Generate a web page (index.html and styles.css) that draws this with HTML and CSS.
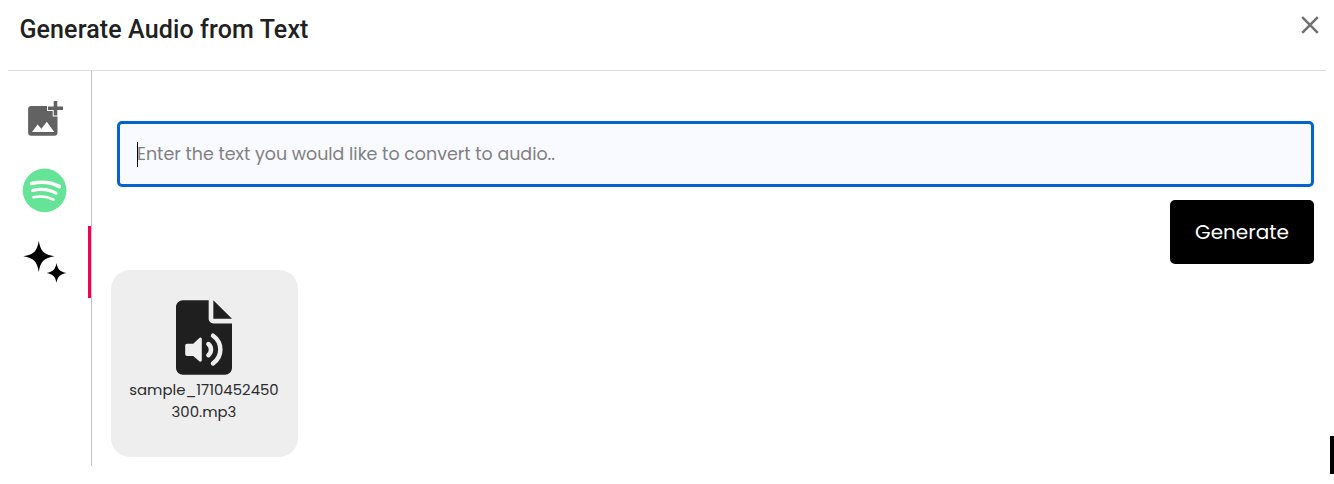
FILE: index.html
```
<!DOCTYPE html>
<html lang="en">
  <head>
    <meta charset="UTF-8" />
    <meta name="viewport" content="width=device-width, initial-scale=1.0" />
    <title>Generate Audio from Text</title>
    <link rel="stylesheet" href="styles.css">
  </head>
  <body>
    <div class="modal">
      <header class="modal-header">
        <h1>Generate Audio from Text</h1>
        <button class="close-btn" aria-label="Close">
          <svg width="18" height="18" viewBox="0 0 18 18">
            <path d="M1.200 1.200l15.600 15.600M16.800 1.200L1.200 16.800" stroke="currentColor" stroke-width="2.500" />
          </svg>
        </button>
      </header>
      <div class="modal-body">
        <nav class="tabs">
          <button class="tab" aria-label="Upload">
            <svg width="44" height="44" viewBox="0 0 44 44">
              <path fill="#626262" d="M8.300 9.100H31l3.500 4v22.500a3.200 3.200 0 0 1-3.200 3.200h-23a3.200 3.200 0 0 1-3.200-3.200V12.300a3.200 3.200 0 0 1 3.200-3.200z" />
              <path fill="#fff" d="M9 35l5.600-7.600 3.800 4.400 5.400-7L31.300 35z" />
              <path fill="#626262" stroke="#fff" stroke-width="2" paint-order="stroke" d="M30.700 4h3.600v5.400H40v3.500h-5.700v5.500h-3.600v-5.500H25V9.400h5.700z" />
            </svg>
          </button>
          <button class="tab" aria-label="Spotify">
            <svg width="44" height="44" viewBox="0 0 44 44">
              <circle cx="21.600" cy="22.400" r="21.800" fill="#65e397" />
              <g fill="none" stroke="#fff" stroke-linecap="round">
                <path stroke-width="3.700" d="M8.700 15.500c9.500-2.200 19.500-1.300 27.500 3" />
                <path stroke-width="3.100" d="M9.500 22.400c8.300-1.900 16.700-1 23.500 2.800" />
                <path stroke-width="2.600" d="M10.500 29.200c7.200-1.500 14-.8 20 2.500" />
              </g>
            </svg>
          </button>
          <button class="tab active" aria-label="Generate">
            <svg width="44" height="44" viewBox="0 0 44 44">
              <path d="M15.800.700C17.500 11.200 20.900 14.600 31.500 16.300 20.900 18 17.500 21.400 15.800 31.900 14.100 21.400 10.700 18 .300 16.300 10.700 14.600 14.100 11.200 15.800.700z" />
              <path d="M33.500 23c1.200 6.400 3.500 8.700 9.900 9.900-6.400 1.200-8.700 3.500-9.900 9.900-1.200-6.400-3.500-8.700-9.900-9.900 6.400-1.200 8.700-3.500 9.900-9.900z" />
            </svg>
          </button>
        </nav>
        <main class="content">
          <div class="input-wrap">
            <input class="text-input" type="text" placeholder="Enter the text you would like to convert to audio.." />
            <span class="caret"></span>
          </div>
          <button class="generate-btn">Generate</button>
          <div class="file-card">
            <svg width="56" height="75" viewBox="0 0 384 512">
              <path fill="#1f1f1f" d="M224 128V0H48C21.500 0 0 21.500 0 48v416c0 26.500 21.500 48 48 48h288c26.500 0 48-21.500 48-48V160H256c-17.700 0-32-14.300-32-32zM256 0v128h128z" />
              <path fill="#eee" d="M76 298h42l42-38c7-7 17-3 17 7v144c0 10-10 14-17 7l-42-36H76c-8 0-13-5-13-13v-58c0-8 5-13 13-13z" />
              <path fill="none" stroke="#eee" stroke-width="31" stroke-linecap="round" stroke-linejoin="round" d="M222 301q18 15 18 38t-18 38M254 244q50 35 50 95t-50 95" />
            </svg>
            <span class="file-name">sample_1710452450<br>300.mp3</span>
          </div>
        </main>
      </div>
    </div>
    <div class="edge-mark"></div>
  </body>
</html>
```

FILE: styles.css
```
* {
  box-sizing: border-box;
}

body {
  margin: 0;
  height: 484px;
  overflow: hidden;
  background-color: #fff;
  font-family: Poppins, Inter, sans-serif;
}

button {
  border: none;
  padding: 0;
  background: none;
  font-family: inherit;
  cursor: pointer;
}

.modal {
  padding: 0 8px;
}

/* Header */
.modal-header {
  display: flex;
  justify-content: space-between;
  align-items: flex-start;
  height: 71px;
  padding: 15px 7px 0 11.4px;
  border-bottom: 1px solid #dcdcdc;
}

h1 {
  margin: 0;
  font-family: Roboto, sans-serif;
  font-size: 25px;
  font-weight: 500;
  line-height: 30px;
  letter-spacing: 0.13px;
  color: #212121;
}

.close-btn {
  height: 18px;
  margin-top: 1px;
  color: #707070;
}

.close-btn svg,
.tab svg {
  display: block;
}

.modal-body {
  display: flex;
  height: 395px;
}

/* Side tabs */
.tabs {
  display: flex;
  flex-direction: column;
  width: 84px;
  padding-top: 12px;
  border-right: 1px solid #c2c2c2;
}

.tab {
  display: flex;
  align-items: center;
  height: 71.5px;
  padding-left: 15px;
}

.tab svg {
  overflow: visible;
}

.tab.active {
  border-right: 3px solid #f50057;
}

/* Main area */
.content {
  flex: 1;
  display: flex;
  flex-direction: column;
  padding: 50px 12px 0 19px;
}

.input-wrap {
  position: relative;
  height: 66px;
  margin-left: 6px;
}

.text-input {
  display: block;
  width: 100%;
  height: 100%;
  padding: 0 17px;
  border: 3px solid #0464cf;
  border-radius: 5px;
  background-color: #f9faff;
  font-family: inherit;
  font-size: 17.45px;
  outline: none;
}

.text-input::placeholder {
  color: #808080;
  opacity: 1;
}

.caret {
  position: absolute;
  left: 20px;
  top: 21px;
  width: 1px;
  height: 25px;
  background-color: #000;
}

.generate-btn {
  align-self: flex-end;
  width: 144px;
  height: 64px;
  margin-top: 13px;
  border-radius: 5px;
  background-color: #000;
  color: #fff;
  font-size: 20px;
}

.file-card {
  display: flex;
  flex-direction: column;
  align-items: center;
  width: 187px;
  height: 187px;
  margin-top: 6px;
  padding: 30px 1px 0 0;
  border-radius: 19px;
  background-color: #eee;
}

.file-name {
  margin-top: 4px;
  font-size: 14.9px;
  line-height: 22px;
  text-align: center;
  color: #2b2b2b;
}

.edge-mark {
  position: absolute;
  right: 0;
  top: 436px;
  width: 4px;
  height: 38px;
  background-color: #000;
}
```
